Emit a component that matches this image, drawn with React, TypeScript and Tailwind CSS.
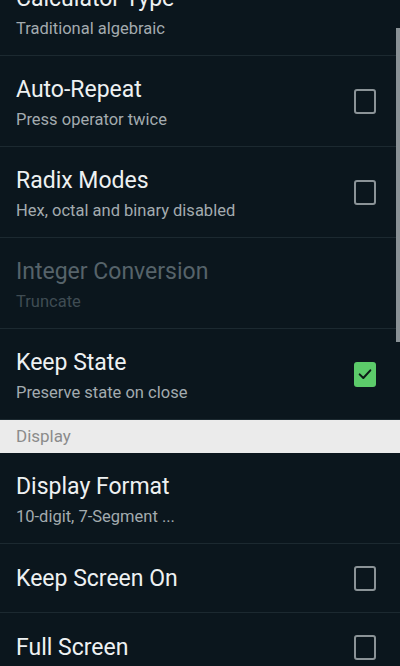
import type { ReactNode } from "react";

type Pref = {
  title: string;
  summary?: string;
  check?: "off" | "on";
  disabled?: boolean;
};

const general: Pref[] = [
  { title: "Calculator Type", summary: "Traditional algebraic" },
  { title: "Auto-Repeat", summary: "Press operator twice", check: "off" },
  { title: "Radix Modes", summary: "Hex, octal and binary disabled", check: "off" },
  { title: "Integer Conversion", summary: "Truncate", disabled: true },
  { title: "Keep State", summary: "Preserve state on close", check: "on" },
];

const display: Pref[] = [
  { title: "Display Format", summary: "10-digit, 7-Segment ..." },
  { title: "Keep Screen On", check: "off" },
  { title: "Full Screen", check: "off" },
];

function CheckBox({ on }: { on: boolean }) {
  if (on) {
    return (
      <div className="flex h-[25px] w-[22px] items-center justify-center rounded-[3px] bg-[#5ccb6a]">
        <svg viewBox="0 0 24 24" className="h-[16px] w-[16px]" fill="none" stroke="#0d1a16" strokeWidth="3" strokeLinecap="round" strokeLinejoin="round">
          <polyline points="4 12.5 9.5 18 20 6.5" />
        </svg>
      </div>
    );
  }
  return <div className="h-[25px] w-[22px] rounded-[3px] border-2 border-[#8b9397]" />;
}

function Row({ pref }: { pref: Pref }) {
  const twoLine = Boolean(pref.summary);
  return (
    <div
      className={`flex items-center justify-between border-b border-[#1c2930] pl-4 pr-[24px] ${
        twoLine ? "h-[91px]" : "h-[69px]"
      }`}
    >
      <div className={`flex flex-col ${twoLine ? "pt-[4px]" : "pt-[1px]"}`}>
        <span
          className={`text-[23px] leading-[28px] ${pref.disabled ? "text-[#56636a]" : "text-[#eef1f2]"}`}
        >
          {pref.title}
        </span>
        {pref.summary ? (
          <span
            className={`mt-[6px] text-[16.5px] leading-[20px] ${
              pref.disabled ? "text-[#3f4c53]" : "text-[#a3abaf]"
            }`}
          >
            {pref.summary}
          </span>
        ) : null}
      </div>
      {pref.check ? <CheckBox on={pref.check === "on"} /> : null}
    </div>
  );
}

function Header({ children }: { children: ReactNode }) {
  return (
    <div className="flex h-[33px] items-center bg-[#ebebeb] px-4 text-[17px] text-[#8b8b8b]">
      {children}
    </div>
  );
}

export default function App() {
  return (
    <div
      className="relative h-[666px] w-[400px] overflow-hidden bg-[#0b161d]"
      style={{ fontFamily: "Roboto, 'Noto Sans', sans-serif" }}
    >
      <div className="-mt-[35px] flex flex-col">
        {general.map((p) => (
          <Row key={p.title} pref={p} />
        ))}
        <Header>Display</Header>
        {display.map((p) => (
          <Row key={p.title} pref={p} />
        ))}
      </div>
      {/* scroll thumb */}
      <div className="absolute right-0 top-[28px] h-[314px] w-[4px] bg-[#8a9296]" />
    </div>
  );
}
